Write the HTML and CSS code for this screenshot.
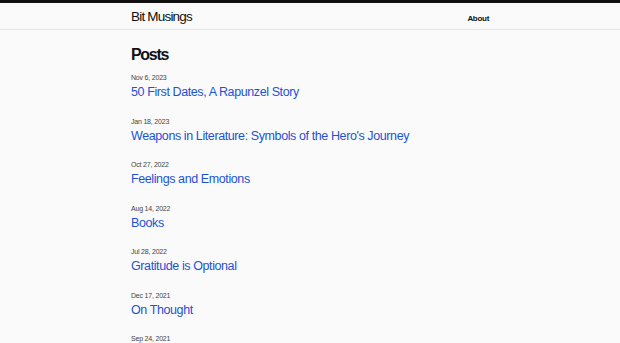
FILE: index.html
```html
<!DOCTYPE html>
<html lang="en">
<head>
  <meta charset="UTF-8">
  <meta name="viewport" content="width=device-width, initial-scale=1">
  <title>Bit Musings</title>
  <link rel="stylesheet" href="styles.css">
</head>
<body>
  <!-- Header -->
  <header class="site-header">
    <div class="wrap header-inner">
      <a class="brand" href="#">Bit Musings</a>
      <nav class="menu">
        <a href="#">About</a>
      </nav>
    </div>
  </header>

  <!-- Post list -->
  <main class="wrap">
    <h1 class="page-title">Posts</h1>
    <ul class="post-list">
      <li class="post">
        <span class="post-date">Nov 6, 2023</span>
        <a class="post-link" href="#">50 First Dates, A Rapunzel Story</a>
      </li>
      <li class="post">
        <span class="post-date">Jan 18, 2023</span>
        <a class="post-link" href="#">Weapons in Literature: Symbols of the Hero's Journey</a>
      </li>
      <li class="post">
        <span class="post-date">Oct 27, 2022</span>
        <a class="post-link" href="#">Feelings and Emotions</a>
      </li>
      <li class="post">
        <span class="post-date">Aug 14, 2022</span>
        <a class="post-link" href="#">Books</a>
      </li>
      <li class="post">
        <span class="post-date">Jul 28, 2022</span>
        <a class="post-link" href="#">Gratitude is Optional</a>
      </li>
      <li class="post">
        <span class="post-date">Dec 17, 2021</span>
        <a class="post-link" href="#">On Thought</a>
      </li>
      <li class="post">
        <span class="post-date">Sep 24, 2021</span>
        <a class="post-link" href="#">Writing</a>
      </li>
    </ul>
  </main>
</body>
</html>
```

FILE: styles.css
```css
/* Reset */
* {
  margin: 0;
  padding: 0;
  box-sizing: border-box;
}
body {
  font-family: "Liberation Sans", Arial, sans-serif;
  background: #fafafa;
  color: #111;
  border-top: 3px solid #111;
  overflow: hidden;
}
a {
  text-decoration: none;
}
.wrap {
  width: 358px;
  margin: 0 auto;
}
/* Header */
.site-header {
  border-bottom: 1px solid #e6e6e6;
}
.header-inner {
  height: 26px;
  display: flex;
  justify-content: space-between;
  align-items: center;
}
.brand {
  color: #111;
  font-size: 13.5px;
  letter-spacing: -0.8px;
}
.menu a {
  color: #111;
  font-size: 8px;
  font-weight: bold;
  letter-spacing: -0.3px;
}
/* Posts */
.page-title {
  font-size: 16px;
  letter-spacing: -1.3px;
  margin-top: 15px;
  line-height: 20px;
}
.post-list {
  list-style: none;
  margin-top: 8px;
}
.post {
  display: flex;
  flex-direction: column;
  margin-bottom: 15.5px;
}
.post-date {
  font-size: 7px;
  color: #444;
  line-height: 10px;
  letter-spacing: -0.2px;
}
.post-link {
  color: #1c52d8;
  font-size: 12.5px;
  line-height: 17px;
  padding-top: 1px;
  letter-spacing: -0.4px;
}
```
